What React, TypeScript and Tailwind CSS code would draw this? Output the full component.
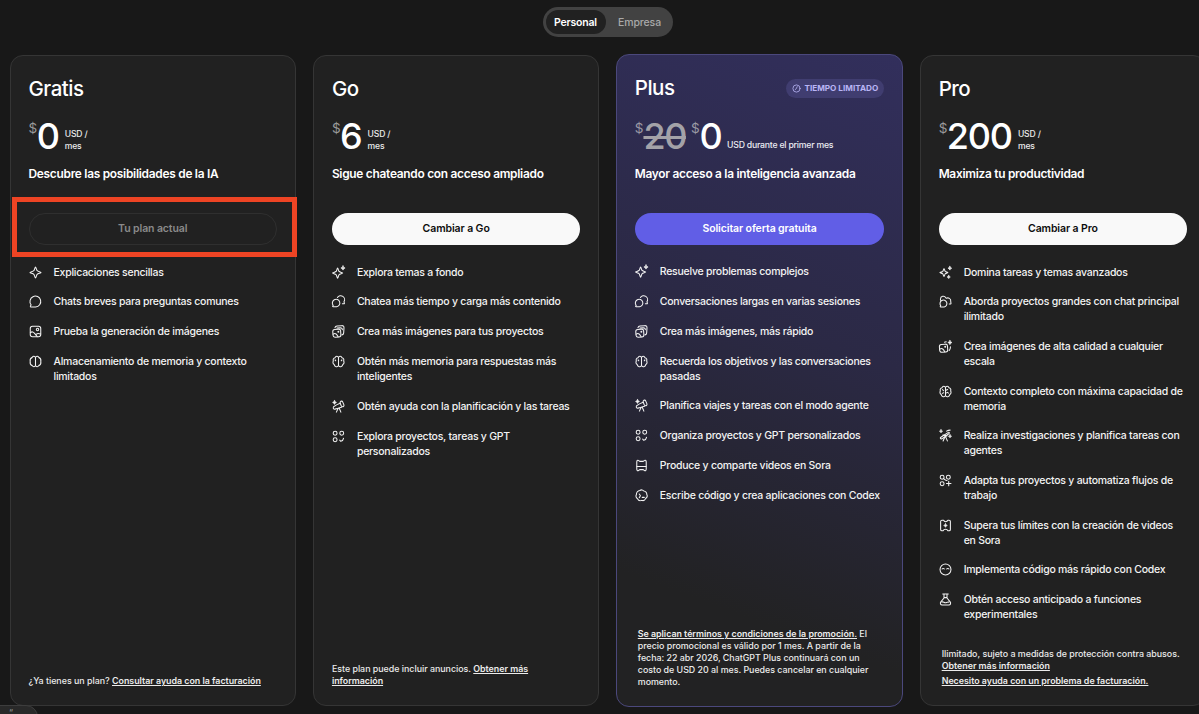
import { ReactNode } from "react";
import clsx from "clsx";

const Spark = ({ x, y, r = 2.6 }: { x: number; y: number; r?: number }) => (
  <path
    d={`M${x} ${y - r}Q${x + 0.4} ${y - 0.4} ${x + r} ${y}Q${x + 0.4} ${y + 0.4} ${x} ${y + r}Q${x - 0.4} ${y + 0.4} ${x - r} ${y}Q${x - 0.4} ${y - 0.4} ${x} ${y - r}Z`}
    fill="currentColor"
    strokeWidth="0.9"
  />
);

const icons: Record<string, ReactNode> = {
  star: <path d="M10 2.600c.7 0 1.200 3.500 2.200 5 1.100 1.100 5.200 1.700 5.200 2.400s-4.100 1.300-5.200 2.400c-1 1.500-1.500 5-2.200 5s-1.200-3.500-2.200-5c-1.100-1.100-5.200-1.700-5.200-2.400s4.100-1.300 5.200-2.400c1-1.500 1.500-5 2.200-5Z" />,
  starPlus: (
    <>
      <path d="M8.800 4.100c.7 0 1 3.100 1.900 4.500.9 1.100 4.900 1.500 4.900 2.200s-4 1.100-4.900 2.200c-.9 1.400-1.200 4.500-1.900 4.500s-1-3.100-1.900-4.500c-.9-1.100-4.900-1.500-4.900-2.200s4-1.100 4.900-2.200c.9-1.400 1.200-4.500 1.900-4.500Z" />
      <Spark x={16} y={4} r={2.800} />
    </>
  ),
  starPro: (
    <>
      <path d="M8 5c.6 0 .8 2.500 1.600 3.500.8.800 3.600 1 3.600 1.600s-2.800.8-3.600 1.600c-.8 1-1 3.500-1.600 3.500s-.8-2.500-1.600-3.500c-.8-.8-3.900-1-3.900-1.600s3.100-.8 3.900-1.600c.8-1 1-3.500 1.600-3.500Z" />
      <Spark x={15.800} y={4.300} r={2.500} />
      <Spark x={14.300} y={16} r={2.100} />
    </>
  ),
  chat: <path d="M10.200 17.200H3.700c-.5 0-.7-.4-.5-.8l.9-2A7.200 7.200 0 1 1 10.200 17.200Z" />,
  chats: (
    <>
      <path d="M7.500 17H2.700c-.5 0-.7-.4-.4-.8l.6-1A5 5 0 1 1 7.500 17Z" />
      <path d="M8.600 4.700a5.100 5.100 0 0 1 8.700 5.600l.5 1.800c.2.700 0 1-.6 1h-2" />
    </>
  ),
  chatsPro: (
    <>
      <path d="M8.300 17.200H3.500c-.5 0-.7-.4-.4-.8l.5-.9A4.600 4.600 0 1 1 8.300 17.200Z" />
      <path d="M3.300 8.300V6.600a3.700 3.700 0 0 1 7-1.600M11 5.700c2.700-1.400 6.600.4 6 4.300-.1.700.7 3.200 0 3.200h-2" />
    </>
  ),
  image: (
    <>
      <rect x="3" y="3" width="14" height="14" rx="3" />
      <circle cx="12.700" cy="7.300" r="1.600" />
      <path d="M3.200 11.500c2-1.700 4-1.100 5.300.6l3.800 4.700M10.800 13.800c1.600-1.600 3.800-1.500 6-.4" />
    </>
  ),
  images: (
    <>
      <rect x="2.500" y="7" width="10.500" height="10.500" rx="2.800" transform="rotate(-4 8 12)" />
      <circle cx="9.800" cy="10.300" r=".6" />
      <path d="M3 13.500c3-2 5 .3 6.500 3.500" />
      <path d="M5.300 4.900C5.700 3.600 6.500 3 8 2.800l6.200-.6c2.200-.1 3.300.9 3.100 3.100l-.4 6.500c-.1 1.600-.9 2.400-2.300 2.700M8 5.200l4.400-.2c1.800 0 2.800 1 2.700 2.700" />
    </>
  ),
  imagesPro: (
    <>
      <rect x="2" y="7" width="10.800" height="10.500" rx="2.800" transform="rotate(-4 8 12)" />
      <circle cx="9.600" cy="10.400" r=".6" />
      <path d="M2.500 13.500c3-2 5 .3 6.500 3.500M8.600 4.300l2.400-.6M16.700 10.300c-.2 2.500-.5 4-1.800 5" />
      <Spark x={15.900} y={4.700} r={2.800} />
    </>
  ),
  memory: (
    <>
      <path d="M10 4.800C9.300 2.600 6.700 2.500 5.700 4.500 3.200 5.300 2.600 8 2.900 10c-.3 2 .3 4.700 2.800 5.500 1 2 3.600 1.900 4.300-.3 0-3 0-7.400 0-10.400Z" />
      <path d="M10 4.800c.7-2.200 3.300-2.300 4.300-.3 2.500.8 3.100 3.500 2.800 5.500.3 2-.3 4.700-2.800 5.500-1 2-3.600 1.900-4.300-.3" />
    </>
  ),
  brain: (
    <>
      <path d="M10 4.800C9.300 2.400 6.100 2.600 5.500 4.900 3.300 5.300 2.200 7.400 3.200 9.200c-1.100 1.500-.7 4 1.100 4.800.2 3 4.700 4.200 5.700 1.200V4.800Z" />
      <path d="M10 4.800c.7-2.400 3.900-2.200 4.500.1 2.200.4 3.300 2.500 2.300 4.300 1.100 1.500.7 4-1.100 4.800-.2 3-4.700 4.200-5.700 1.200M5.500 7.600c-.1.700.2 1.200.8 1.500M14.500 7.600c.1.700-.2 1.200-.8 1.500" />
    </>
  ),
  brainPro: (
    <>
      <path d="M10 4.800C9.300 2.400 6.100 2.600 5.500 4.900 3.300 5.300 2.200 7.400 3.200 9.200c-1.100 1.500-.7 4 1.100 4.800.2 3 4.700 4.200 5.700 1.200V4.800Z" />
      <path d="M10 4.800c.7-2.400 3.900-2.200 4.500.1 2.200.4 3.300 2.500 2.300 4.300 1.100 1.500.7 4-1.100 4.800-.2 3-4.700 4.200-5.700 1.200M6 7.400 7.500 9M5.700 12.500l1.800-.8M10 8.700l2.800-1.400M10 12.500l2.600-1.300 1.300 1" />
    </>
  ),
  agent: (
    <>
      <path d="m8 7.500 4.200-1.900M3.300 10.500c-.8 1.600.1 3.300 1.900 3l3.300-.9 5.500-1.500M3.300 10.500l3.600-2.300" />
      <path d="M12.800 3.300c.8-.8 2.100-.6 2.700.5l1.500 3.400c.6 1.500.2 2.900-.9 3.200-1.200.3-2-.5-2.600-1.700l-1-2.600c-.5-1.100-.4-2.200.3-2.800Z" />
      <path d="m9.400 12.700-2.200 4.800M11 12.400l2.200 5.100" />
      <Spark x={4.700} y={4.600} r={2.600} />
    </>
  ),
  agentPro: (
    <>
      <path d="M3.300 12.700 13.800 5.900c1-.7 1.900.5 1 1.400L6 14c-1.600 1-3.400.2-2.700-1.300Z" />
      <path d="m9 12.400-2.200 5M10 11.500l2.500 5.700M6.500 9.500l5.500 1M11.500 4.200c1.300-.9 2.800-1.400 4.700-1.400" />
      <Spark x={4} y={4.300} r={2.100} />
      <Spark x={16} y={11} r={2.100} />
    </>
  ),
  apps: (
    <>
      <circle cx="5.500" cy="5.700" r="2.600" />
      <circle cx="14.300" cy="5.700" r="2.600" />
      <circle cx="5.500" cy="14.300" r="2.600" />
      <path d="M11.600 14.800 13 16.400c1.800-.4 3.300-1.700 3.700-4" />
    </>
  ),
  appsPro: (
    <>
      <circle cx="5.500" cy="5.700" r="2.600" />
      <circle cx="13.800" cy="5.700" r="2.600" />
      <circle cx="5.500" cy="14.300" r="2.600" />
      <path d="M7.500 7.500c2 2.200 3 2.800 4.600 2.500M14.300 11v6M11.300 14h6" />
    </>
  ),
  video: (
    <>
      <path d="M3.700 5.200c0-1.800 1-2.600 2.300-1.900.8.400 1 1.200 2 1.200h4c1 0 1.200-.8 2-1.200 1.300-.7 2.300.1 2.300 1.900v9.600c0 1.800-1 2.600-2.300 1.900-.8-.4-1-1.200-2-1.200H8c-1 0-1.200.8-2 1.200-1.300.7-2.300-.1-2.300-1.900V5.200Z" />
      <path d="M3.900 11.300h12.200" />
    </>
  ),
  videoPro: (
    <>
      <path d="M7.500 3H5.300C4.100 3 3.500 3.600 3.500 4.800v10.400c0 1.200.6 1.800 1.800 1.800h1.500c.8-1.700 1.700-1.900 3.200-1.900s2.400.2 3.200 1.900h1.500c1.200 0 1.800-.6 1.800-1.800V4.800c0-1.200-.6-1.800-1.800-1.800h-1.500c-.8 1.700-1.700 1.900-3.200 1.900S8.200 4.700 7.500 3Z" />
      <Spark x={10} y={10} r={2.400} />
    </>
  ),
  code: (
    <>
      <path d="M7.700 3.300c1.900-1.400 4.300-.8 5.400.7 2.300.2 4.100 2.200 3.900 4.400 1.100 2.100.4 4.500-1.600 5.700-.8 2.300-3.200 3.100-5.300 2.400-2.200.9-4.500-.2-5.400-2.200-2-1-2.700-3.500-1.500-5.500-.1-2.500 1.900-5.100 4.500-5.500Z" />
      <path d="m7 8 1.600 2.400L7 12.800M11 12.500h2.700" />
    </>
  ),
  codePro: (
    <>
      <circle cx="10" cy="10" r="7.300" />
      <path d="M5.300 9.300c.8-.9 2.400-.9 3.200 0M11.500 9.300c.8-.9 2.400-.9 3.200 0" />
    </>
  ),
  flask: (
    <>
      <path d="M6.300 2.700h7.400M8 3v5l-4.200 5.200c-1.300 1.900-.5 4 1.800 4h8.800c2.300 0 3.100-2.100 1.800-4L12 8V3M8 7.500h4" />
      <path d="M5 13.400c2-1.200 3.300 1.400 5.300.9 1.200-.3 2.500-1.300 4.200-.8" />
    </>
  ),
};

const Icon = ({ name }: { name: string }) => (
  <svg viewBox="0 0 20 20" className="-ml-[0.500px] size-[15px] shrink-0" fill="none" stroke="currentColor" strokeWidth="1.400" strokeLinecap="round" strokeLinejoin="round">
    {icons[name]}
  </svg>
);

type Plan = {
  name: string;
  price: string;
  tagline: string;
  cta: string;
  features: [string, string][];
  footer: ReactNode;
};

const link = "underline font-semibold underline-offset-1";

const plans: Plan[] = [
  {
    name: "Gratis",
    price: "0",
    tagline: "Descubre las posibilidades de la IA",
    cta: "Tu plan actual",
    features: [
      ["star", "Explicaciones sencillas"],
      ["chat", "Chats breves para preguntas comunes"],
      ["image", "Prueba la generación de imágenes"],
      ["memory", "Almacenamiento de memoria y contexto\nlimitados"],
    ],
    footer: <p>¿Ya tienes un plan? <a className={link}>Consultar ayuda con la facturación</a></p>,
  },
  {
    name: "Go",
    price: "6",
    tagline: "Sigue chateando con acceso ampliado",
    cta: "Cambiar a Go",
    features: [
      ["starPlus", "Explora temas a fondo"],
      ["chats", "Chatea más tiempo y carga más contenido"],
      ["images", "Crea más imágenes para tus proyectos"],
      ["brain", "Obtén más memoria para respuestas más\ninteligentes"],
      ["agent", "Obtén ayuda con la planificación y las tareas"],
      ["apps", "Explora proyectos, tareas y GPT\npersonalizados"],
    ],
    footer: <p>Este plan puede incluir anuncios. <a className={link}>Obtener más<br />información</a></p>,
  },
  {
    name: "Plus",
    price: "0",
    tagline: "Mayor acceso a la inteligencia avanzada",
    cta: "Solicitar oferta gratuita",
    features: [
      ["starPlus", "Resuelve problemas complejos"],
      ["chats", "Conversaciones largas en varias sesiones"],
      ["images", "Crea más imágenes, más rápido"],
      ["brain", "Recuerda los objetivos y las conversaciones\npasadas"],
      ["agent", "Planifica viajes y tareas con el modo agente"],
      ["apps", "Organiza proyectos y GPT personalizados"],
      ["video", "Produce y comparte videos en Sora"],
      ["code", "Escribe código y crea aplicaciones con Codex"],
    ],
    footer: (
      <p className="pl-[3px]">
        <a className={link}>Se aplican términos y condiciones de la promoción.</a> El<br />
        precio promocional es válido por 1 mes. A partir de la<br />
        fecha: 22 abr 2026, ChatGPT Plus continuará con un<br />
        costo de USD 20 al mes. Puedes cancelar en cualquier<br />
        momento.
      </p>
    ),
  },
  {
    name: "Pro",
    price: "200",
    tagline: "Maximiza tu productividad",
    cta: "Cambiar a Pro",
    features: [
      ["starPro", "Domina tareas y temas avanzados"],
      ["chatsPro", "Aborda proyectos grandes con chat principal\nilimitado"],
      ["imagesPro", "Crea imágenes de alta calidad a cualquier\nescala"],
      ["brainPro", "Contexto completo con máxima capacidad de\nmemoria"],
      ["agentPro", "Realiza investigaciones y planifica tareas con\nagentes"],
      ["appsPro", "Adapta tus proyectos y automatiza flujos de\ntrabajo"],
      ["videoPro", "Supera tus límites con la creación de videos\nen Sora"],
      ["codePro", "Implementa código más rápido con Codex"],
      ["flask", "Obtén acceso anticipado a funciones\nexperimentales"],
    ],
    footer: (
      <div className="pl-[3px]">
        <p>Ilimitado, sujeto a medidas de protección contra abusos.<br /><a className={link}>Obtener más información</a></p>
        <p className="mt-[3px]"><a className={link}>Necesito ayuda con un problema de facturación.</a></p>
      </div>
    ),
  },
];

const Card = ({ plan }: { plan: Plan }) => {
  const plus = plan.name === "Plus";
  const free = plan.name === "Gratis";

  return (
    <section
      className={clsx(
        "relative flex shrink-0 flex-col rounded-[13px] border whitespace-nowrap",
        plus
          ? "-mx-px -mt-px h-[653px] w-[287.500px] border-[#4b487c] bg-[linear-gradient(200deg,#322f5c_0%,#2b2945_42%,#222223_82%)] px-[18px] pt-[18.500px] pb-[18px]"
          : "h-[651px] w-[285.500px] border-[#353535] bg-[#212121] px-[17.500px] pt-[18px] pb-[18px]"
      )}
    >
      <div className="flex h-[30px] items-center justify-between">
        <h2 className="text-[20.500px] font-[550] tracking-[-0.500px]">{plan.name}</h2>
        {plus && (
          <span className="flex h-[19px] items-center gap-[3px] rounded-full bg-[#403d70] px-[6px] text-[8.200px] font-bold text-[#b9b5f5]">
            <svg viewBox="0 0 10 10" className="size-[9px]" fill="none" stroke="currentColor" strokeWidth="0.9" strokeLinecap="round">
              <circle cx="5" cy="5" r="4" />
              <path d="M5.800 2.900 4.700 5.300 3.500 6.200" />
            </svg>
            TIEMPO LIMITADO
          </span>
        )}
      </div>

      {/* Price */}
      <div className="mt-[14px] flex h-[36px] text-[36px] leading-[36px] font-[550]">
        {plus && (
          <>
            <span className="mt-[3px] text-[13.500px] leading-[14px] font-normal text-[#9b9aa5]">$</span>
            <span className="mr-[5px] text-[#a3a2a8] line-through decoration-[3px] tracking-[-1.500px]">20</span>
          </>
        )}
        <span className={clsx("mt-[3px] text-[13.500px] leading-[14px] font-normal", plus ? "text-[#9b9aa5]" : "text-[#9b9b9b]")}>$</span>
        <span className={clsx("tracking-[-1.200px]", plus ? "ml-0" : "-ml-[0.500px]")}>{plan.price}</span>
        {plus ? (
          <span className="mt-[21px] ml-[5.500px] text-[8.700px] leading-[12px] font-medium tracking-[-0.220px] text-[#ececf2]">USD durante el primer mes</span>
        ) : (
          <span className="mt-[10px] ml-[6px] text-[8.600px] leading-[12px] font-medium tracking-[-0.150px] text-[#ececec]">USD /<br />mes</span>
        )}
      </div>

      <p className="mt-[12px] text-[11.900px] leading-[16px] font-semibold tracking-[-0.270px]">{plan.tagline}</p>

      <button
        className={clsx(
          "mt-[31px] h-[32px] shrink-0 rounded-full text-[10.500px] font-semibold tracking-[-0.100px]",
          free && "border border-[#2f2f2f] text-[#8a8a8a]",
          plus && "bg-[#615ee6] text-white",
          !free && !plus && "bg-[#f9f9f9] text-[#0d0d0d]"
        )}
      >
        {plan.cta}
      </button>

      <ul className="mt-[19.600px] flex flex-col gap-[14.850px] text-[10.500px] leading-[14.900px] tracking-[-0.250px] text-[#f3f3f3]">
        {plan.features.map(([icon, text]) => (
          <li key={text} className="flex gap-[10.500px]">
            <Icon name={icon} />
            <span className="-mb-px whitespace-pre pt-px font-medium">{text}</span>
          </li>
        ))}
      </ul>

      <footer className="mt-auto text-[8.900px] leading-[12px] font-medium tracking-[-0.020px] text-[#ececec]">{plan.footer}</footer>

      {/* Highlight over the current plan button */}
      {free && <div className="absolute top-[141px] left-[1px] h-[60px] w-[285px] border-5 border-[#ee4424]" />}
    </section>
  );
};

export default function App() {
  return (
    <main className="relative h-[714px] w-full overflow-hidden bg-[#181818] pt-[7px] font-['Inter',sans-serif] text-white">
      <nav className="relative left-[8px] mx-auto flex h-[30px] w-[130px] items-center rounded-full bg-[#424242] p-[3px] text-[10.500px] tracking-[-0.200px]">
        <span className="flex h-[24px] w-[60px] items-center justify-center rounded-full bg-[#212121] pt-px font-semibold">Personal</span>
        <span className="flex-1 pt-px pl-1 text-center font-medium tracking-[-0.100px] text-[#a9a9a9]">Empresa</span>
      </nav>

      <section className="mt-[18px] flex gap-[17.900px] pl-[10px]">
        {plans.map((plan) => (
          <Card key={plan.name} plan={plan} />
        ))}
      </section>

      <div className="absolute -left-2 top-[705px] h-5 w-[46px] rounded-tr-[12px] border border-[#3d3d3d] bg-[#292929] pl-[16px] text-[9px] text-[#9a9a9a]">“</div>
    </main>
  );
}
